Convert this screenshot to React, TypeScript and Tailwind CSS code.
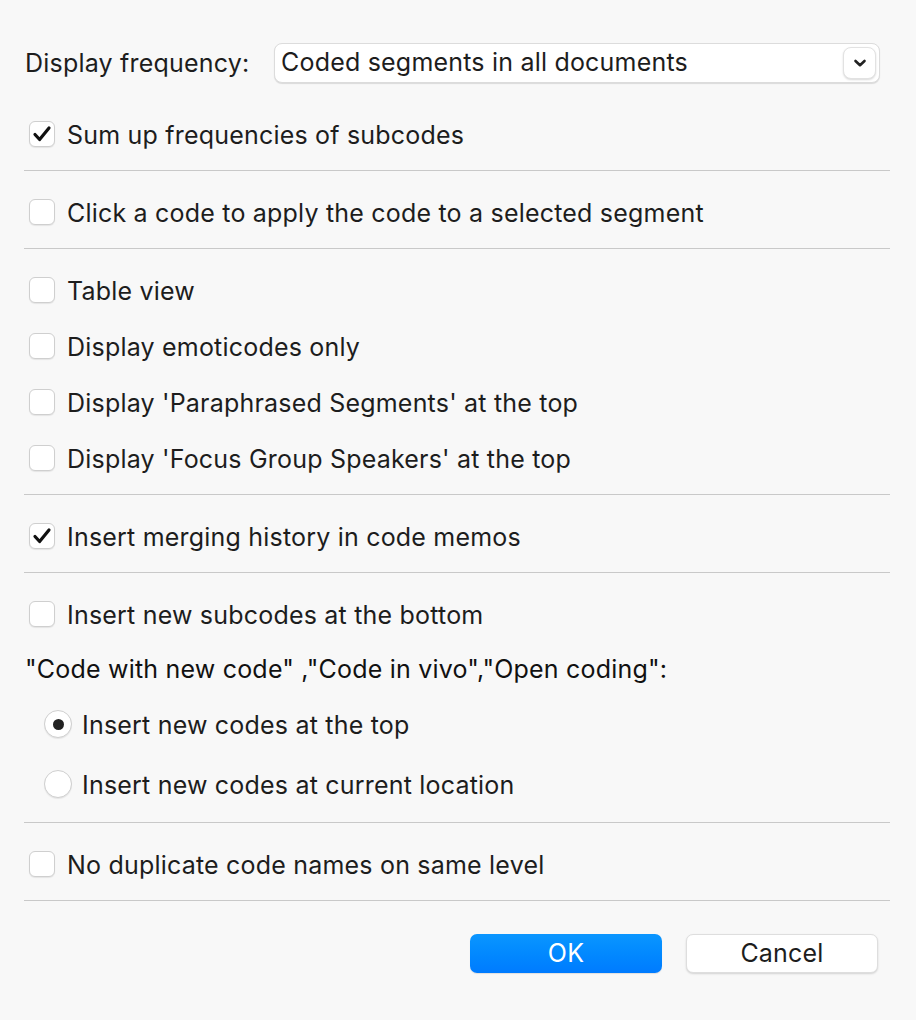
import React from "react";

const font = { fontFamily: "Inter, 'Noto Sans', sans-serif" };

function Check({ checked }: { checked?: boolean }) {
  return (
    <div className="w-[26px] h-[26px] rounded-[6px] bg-white border border-[#cfcfcf] shadow-[0_1px_1px_rgba(0,0,0,0.08)] flex items-center justify-center shrink-0">
      {checked && (
        <svg width="20" height="18" viewBox="0 0 20 18">
          <path d="M3 9.5 L7.6 14.5 L17 3" fill="none" stroke="#111" strokeWidth="3.2" strokeLinecap="round" strokeLinejoin="round" />
        </svg>
      )}
    </div>
  );
}

const base = "text-[25px] tracking-[0.2px] text-[#1d1d1d]";
const txt = base + " pt-[3px]";

function CheckRow({ label, checked }: { label: string; checked?: boolean }) {
  return (
    <div className="h-[56px] flex items-center pl-[29px] gap-[12px]">
      <Check checked={checked} />
      <span className={txt}>{label}</span>
    </div>
  );
}

function Radio({ label, on }: { label: string; on?: boolean }) {
  return (
    <div className="h-[60px] flex items-center pl-[44px] gap-[10px]">
      <div className="w-[28px] h-[28px] rounded-full bg-white border border-[#cfcfcf] shadow-[0_1px_1px_rgba(0,0,0,0.08)] flex items-center justify-center shrink-0">
        {on && <div className="w-[11px] h-[11px] rounded-full bg-[#222]" />}
      </div>
      <span className={txt}>{label}</span>
    </div>
  );
}

function Sep() {
  return <div className="h-px bg-[#c9c9c9] ml-[24px] mr-[26px]" />;
}

function Section({ children }: { children: React.ReactNode }) {
  return <div className="pt-[13px] pb-[8px]">{children}</div>;
}

export default function App() {
  return (
    <div className="w-[916px] h-[1020px] bg-[#f8f8f8] antialiased" style={font}>
      <div className="pt-[43px] h-[83px] flex items-center">
        <span className={"pl-[25px] w-[274px] leading-[40px] " + base}>Display frequency:</span>
        <div className="w-[606px] h-[40px] bg-white rounded-[8px] border border-[#dcdcdc] shadow-[0_1px_1px_rgba(0,0,0,0.12)] flex items-center pl-[6px] pr-[3px]">
          <span className={"flex-1 " + base}>Coded segments in all documents</span>
          <div className="w-[33px] h-[32px] bg-white rounded-[8px] border border-[#e2e2e2] shadow-[0_1px_2px_rgba(0,0,0,0.15)] flex items-center justify-center">
            <svg width="14" height="10" viewBox="0 0 14 10">
              <path d="M2.5 3 L7 7.2 L11.5 3" fill="none" stroke="#222" strokeWidth="2.6" strokeLinecap="round" strokeLinejoin="round" />
            </svg>
          </div>
        </div>
      </div>
      <div className="pt-[23px] pb-[8px]">
        <CheckRow label="Sum up frequencies of subcodes" checked />
      </div>
      <Sep />
      <Section>
        <CheckRow label="Click a code to apply the code to a selected segment" />
      </Section>
      <Sep />
      <Section>
        <CheckRow label="Table view" />
        <CheckRow label="Display emoticodes only" />
        <CheckRow label="Display 'Paraphrased Segments' at the top" />
        <CheckRow label="Display 'Focus Group Speakers' at the top" />
      </Section>
      <Sep />
      <Section>
        <CheckRow label="Insert merging history in code memos" checked />
      </Section>
      <Sep />
      <Section>
        <CheckRow label="Insert new subcodes at the bottom" />
        <div className="h-[52px] flex items-center pl-[25px]">
          <span className="text-[25px] tracking-[0.2px] text-[#111] pt-[3px]">"Code with new code" ,"Code in vivo","Open coding":</span>
        </div>
        <Radio label="Insert new codes at the top" on />
        <Radio label="Insert new codes at current location" />
      </Section>
      <Sep />
      <Section>
        <CheckRow label="No duplicate code names on same level" />
      </Section>
      <Sep />
      <div className="pt-[33px] flex justify-end pr-[38px] gap-[24px]">
        <button className="w-[192px] h-[39px] rounded-[7px] bg-gradient-to-b from-[#0b96ff] to-[#007bff] text-white text-[25px] tracking-[0.2px] shadow-[0_1px_1px_rgba(0,0,0,0.1)]">OK</button>
        <button className="w-[192px] h-[39px] rounded-[7px] bg-white border border-[#dedede] text-[#1d1d1d] text-[25px] tracking-[0.2px] shadow-[0_1px_2px_rgba(0,0,0,0.15)]">Cancel</button>
      </div>
    </div>
  );
}
